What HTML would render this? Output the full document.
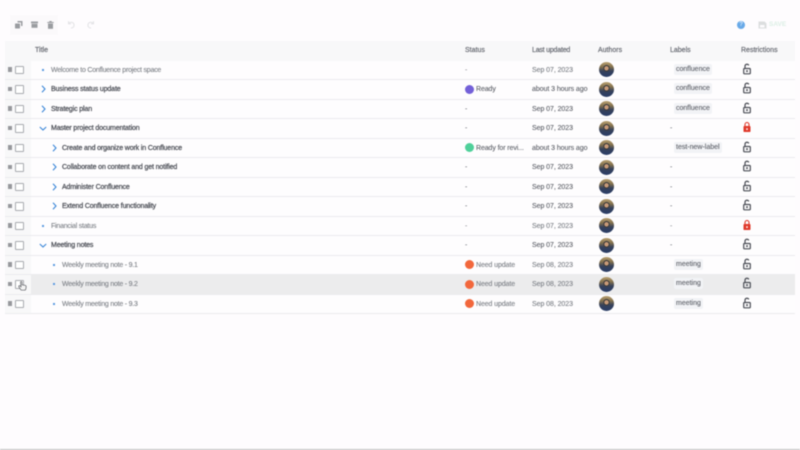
<!DOCTYPE html>
<html><head><meta charset="utf-8"><style>
html,body{margin:0;padding:0}
body{width:800px;height:450px;overflow:hidden;background:#fefcfe;position:relative;font-family:"Liberation Sans",sans-serif;font-size:7px;color:#6b6e76}
.w{position:absolute;left:0;top:0;width:800px;height:450px;filter:blur(.4px)}
.a{position:absolute}
.t{position:absolute;white-space:nowrap;line-height:10px;font-size:7px}
.h{color:#6a6d75;top:45.500px;-webkit-text-stroke:.2px #6a6d75}
.r{position:absolute;left:5px;width:790px;height:19.500px;border-bottom:1px solid #ebebee;box-sizing:border-box;background:#fefdfe}
.r>.t{top:5px}
.g{position:absolute;left:0;top:0;width:26px;height:100%;background:#f8f8f9}
.hd{position:absolute;left:3px;top:6.800px;width:4px;height:4.500px;background:#97989c}
.cb{position:absolute;left:10px;top:5px;width:8.500px;height:8.500px;border:1px solid #a8aaaf;border-radius:1px;background:#fff;box-sizing:border-box}
.d{position:absolute;top:8px;width:2px;height:2px;background:#5a9ae0}
.l1{left:46px}.l2{left:57px}.d1{left:37px}.d2{left:48px}
.ti{letter-spacing:-.22px;color:#7d8087;-webkit-text-stroke:.1px #7d8087}
.b{color:#4c4f57;-webkit-text-stroke:.25px #4c4f57;letter-spacing:-.13px}
.st{left:471px;letter-spacing:-.1px;-webkit-text-stroke:.1px currentColor}
.dash{left:460px}.dt{left:527px;letter-spacing:-.06px;-webkit-text-stroke:.1px currentColor}.ld{left:665px}
.g7{color:#7d8087}
.dk{color:#5f626a}
.av{position:absolute;left:594px;top:1.500px;width:15px;height:15px;border-radius:50%;background:radial-gradient(circle at 50% 42%,#c79a78 0 2px,#39393c 2.400px 3.200px,transparent 3.300px),linear-gradient(#b9a070 0,#84724f 32%,#36415a 60%,#2a3d68 100%)}
.lb{position:absolute;left:669px;top:3px;height:11px;padding:0 2px;background:#f2f3f6;border-radius:2px;line-height:12px;font-size:7px;color:#5f626a;white-space:nowrap;-webkit-text-stroke:.1px #5f626a}
.s{position:absolute;left:460px;top:4.500px;width:9px;height:9px;border-radius:50%}
svg{position:absolute;overflow:visible}
.lk{left:737px;top:2px;width:10px;height:12px}
.cr{top:5px;width:5px;height:8px}
.cd{left:34px;top:6.500px;width:8px;height:5px}
</style></head><body>
<div class="w">
<svg width="0" height="0" style="left:0;top:0"><defs>
<symbol id="o" viewBox="0 0 10 12"><path d="M3 5.500v-2.500a2 2 0 0 1 3.800-.6" fill="none" stroke="#4a4d55" stroke-width="1.200"/><rect x="1.700" y="5.500" width="6.600" height="5.300" rx=".8" fill="none" stroke="#4a4d55" stroke-width="1.200"/><rect x="4.200" y="7.200" width="1.600" height="1.800" fill="#4a4d55"/></symbol>
<symbol id="c" viewBox="0 0 10 12"><path d="M3 5.500v-2a2 2 0 0 1 4 0v2" fill="none" stroke="#e0392b" stroke-width="1.100"/><rect x="1.500" y="5" width="7" height="6" rx=".8" fill="#e0392b"/><rect x="4.300" y="7.200" width="1.400" height="1.800" fill="#fff"/></symbol>
<symbol id="ar" viewBox="0 0 5 8"><path d="M1 .8l3 3.200l-3 3.200" fill="none" stroke="#3a86d8" stroke-width="1.100"/></symbol>
<symbol id="ad" viewBox="0 0 8 5"><path d="M.8 1l3.200 3l3.200-3" fill="none" stroke="#3a86d8" stroke-width="1.100"/></symbol>
</defs></svg>

<div class="a" style="left:10px;top:15px;width:48px;height:20px;background:#fbf9fb"></div>
<svg style="left:14px;top:20px" width="10" height="10" viewBox="0 0 10 10"><path d="M3.500 1h5v5h-1.500v-3.500h-3.500z" fill="#9a9ca0"/><rect x="1" y="3.500" width="5" height="5" rx=".6" fill="#9a9ca0"/></svg>
<svg style="left:30px;top:20px" width="9" height="9" viewBox="0 0 9 9"><path d="M1 1.500h7v1.800h-7z" fill="#9a9ca0"/><path d="M1.500 3.800h6v4h-6z" fill="#9a9ca0"/></svg>
<svg style="left:46px;top:20px" width="9" height="10" viewBox="0 0 9 10"><path d="M1.300 2h6.400v1h-6.400zM3.300 1h2.400v1h-2.400z" fill="#9a9ca0"/><path d="M2 3.500h5v5.300h-5z" fill="#9a9ca0"/></svg>
<svg style="left:67px;top:20px" width="9" height="9" viewBox="0 0 9 9" fill="none" stroke="#e2e2e5" stroke-width="1"><path d="M1.500 3.500c2-2 5-1.500 5.500 1s-1.500 3.500-3 3.500M1.500 1.200v2.500h2.500"/></svg>
<svg style="left:86px;top:20px" width="9" height="9" viewBox="0 0 9 9" fill="none" stroke="#e2e2e5" stroke-width="1"><path d="M7.500 3.500c-2-2-5-1.500-5.500 1s1.500 3.500 3 3.500M7.500 1.200v2.500h-2.500"/></svg>

<div class="a" style="left:737px;top:21px;width:8px;height:8px;border-radius:50%;background:#68a9e8;color:#fff;font-size:6px;line-height:8px;text-align:center">?</div>
<svg style="left:758px;top:21px" width="9" height="8" viewBox="0 0 9 8"><path d="M.5.500h6l2 2v5h-8z" fill="#dcdedf"/><rect x="2" y="4" width="4.500" height="2.500" fill="#fefcfe"/></svg>
<div class="t" style="left:769px;top:20px;color:#dcefe5;font-size:6.500px;font-weight:700">SAVE</div>

<div class="a" style="left:5px;top:41px;width:790px;height:19.500px;background:#f8f8f9"></div>
<div class="t h" style="left:35px">Title</div>
<div class="t h" style="left:465px">Status</div>
<div class="t h" style="left:532px;letter-spacing:-.2px">Last updated</div>
<div class="t h" style="left:598px">Authors</div>
<div class="t h" style="left:670px">Labels</div>
<div class="t h" style="left:741px">Restrictions</div>

<div class="r" style="top:60.500px"><div class="g"></div><div class="hd"></div><div class="cb"></div><div class="d d1"></div>
<div class="t ti l1">Welcome to Confluence project space</div><div class="t g7 dash">-</div><div class="t g7 dt">Sep 07, 2023</div><div class="av"></div><div class="lb">confluence</div><svg class="lk"><use href="#o"/></svg></div>

<div class="r" style="top:80px"><div class="g"></div><div class="hd"></div><div class="cb"></div><svg class="cr" style="left:36px"><use href="#ar"/></svg>
<div class="t b l1">Business status update</div><div class="s" style="background:#7360d8"></div><div class="t dk st">Ready</div><div class="t dk dt">about 3 hours ago</div><div class="av"></div><div class="lb">confluence</div><svg class="lk"><use href="#o"/></svg></div>

<div class="r" style="top:99.500px"><div class="g"></div><div class="hd"></div><div class="cb"></div><svg class="cr" style="left:36px"><use href="#ar"/></svg>
<div class="t b l1">Strategic plan</div><div class="t dk dash">-</div><div class="t dk dt">Sep 07, 2023</div><div class="av"></div><div class="lb">confluence</div><svg class="lk"><use href="#o"/></svg></div>

<div class="r" style="top:119px"><div class="g"></div><div class="hd"></div><div class="cb"></div><svg class="cd"><use href="#ad"/></svg>
<div class="t b l1">Master project documentation</div><div class="t dk dash">-</div><div class="t dk dt">Sep 07, 2023</div><div class="av"></div><div class="t dk ld">-</div><svg class="lk"><use href="#c"/></svg></div>

<div class="r" style="top:138.500px"><div class="g"></div><div class="hd"></div><div class="cb"></div><svg class="cr" style="left:47px"><use href="#ar"/></svg>
<div class="t b l2">Create and organize work in Confluence</div><div class="s" style="background:#4fd09a"></div><div class="t dk st">Ready for revi...</div><div class="t dk dt">about 3 hours ago</div><div class="av"></div><div class="lb">test-new-label</div><svg class="lk"><use href="#o"/></svg></div>

<div class="r" style="top:158px"><div class="g"></div><div class="hd"></div><div class="cb"></div><svg class="cr" style="left:47px"><use href="#ar"/></svg>
<div class="t b l2">Collaborate on content and get notified</div><div class="t dk dash">-</div><div class="t dk dt">Sep 07, 2023</div><div class="av"></div><div class="t dk ld">-</div><svg class="lk"><use href="#o"/></svg></div>

<div class="r" style="top:177.500px"><div class="g"></div><div class="hd"></div><div class="cb"></div><svg class="cr" style="left:47px"><use href="#ar"/></svg>
<div class="t b l2">Administer Confluence</div><div class="t dk dash">-</div><div class="t dk dt">Sep 07, 2023</div><div class="av"></div><div class="t dk ld">-</div><svg class="lk"><use href="#o"/></svg></div>

<div class="r" style="top:197px"><div class="g"></div><div class="hd"></div><div class="cb"></div><svg class="cr" style="left:47px"><use href="#ar"/></svg>
<div class="t b l2">Extend Confluence functionality</div><div class="t dk dash">-</div><div class="t dk dt">Sep 07, 2023</div><div class="av"></div><div class="t dk ld">-</div><svg class="lk"><use href="#o"/></svg></div>

<div class="r" style="top:216.500px"><div class="g"></div><div class="hd"></div><div class="cb"></div><div class="d d1"></div>
<div class="t ti l1">Financial status</div><div class="t g7 dash">-</div><div class="t g7 dt">Sep 07, 2023</div><div class="av"></div><div class="t g7 ld">-</div><svg class="lk"><use href="#c"/></svg></div>

<div class="r" style="top:236px"><div class="g"></div><div class="hd"></div><div class="cb"></div><svg class="cd"><use href="#ad"/></svg>
<div class="t b l1">Meeting notes</div><div class="t dk dash">-</div><div class="t dk dt">Sep 07, 2023</div><div class="av"></div><div class="t dk ld">-</div><svg class="lk"><use href="#o"/></svg></div>

<div class="r" style="top:255.500px"><div class="g"></div><div class="hd"></div><div class="cb"></div><div class="d d2"></div>
<div class="t ti l2">Weekly meeting note - 9.1</div><div class="s" style="background:#f2673c"></div><div class="t g7 st">Need update</div><div class="t g7 dt">Sep 08, 2023</div><div class="av"></div><div class="lb">meeting</div><svg class="lk"><use href="#o"/></svg></div>

<div class="r" style="top:275px;background:#ececed"><div class="g"></div><div class="hd"></div><div class="cb"></div><div class="d d2"></div>
<div class="t ti l2">Weekly meeting note - 9.2</div><div class="s" style="background:#f2673c"></div><div class="t g7 st">Need update</div><div class="t g7 dt">Sep 08, 2023</div><div class="av"></div><div class="lb">meeting</div><svg class="lk"><use href="#o"/></svg>
<svg style="left:13px;top:6px" width="9" height="10" viewBox="0 0 9 10"><path d="M2.500 1.300c0-1 1.500-1 1.500 0v2.500l3 .5c1 .2 1.300.8 1.200 1.700l-.4 2c-.2.800-.6 1.200-1.400 1.200h-2.500c-.6 0-1-.3-1.300-.8l-1.800-2.600c-.5-.8.500-1.500 1.200-.9l1 .9z" fill="#f4f4f4" stroke="#5a5c62" stroke-width=".7"/></svg></div>

<div class="r" style="top:294.500px"><div class="g"></div><div class="hd"></div><div class="cb"></div><div class="d d2"></div>
<div class="t ti l2">Weekly meeting note - 9.3</div><div class="s" style="background:#f2673c"></div><div class="t g7 st">Need update</div><div class="t g7 dt">Sep 08, 2023</div><div class="av"></div><div class="lb">meeting</div><svg class="lk"><use href="#o"/></svg></div>

<div class="a" style="left:0;top:449px;width:800px;height:1px;background:#bdbdbd"></div>
</div>
</body></html>
